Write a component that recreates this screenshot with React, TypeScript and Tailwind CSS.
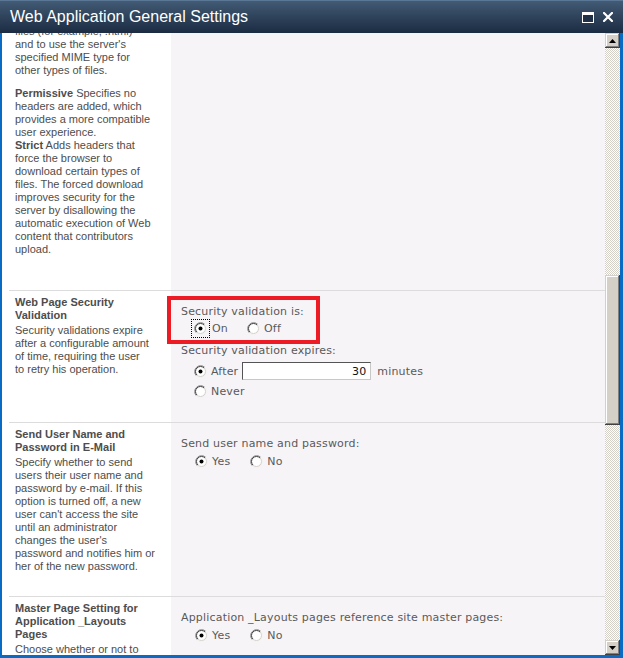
import React from "react";

const Radio = ({ checked }: { checked?: boolean }) => (
  <svg width="13" height="13" viewBox="0 0 13 13" className="block shrink-0">
    <circle cx="6.5" cy="6.5" r="6" fill="#ffffff" />
    <path d="M2.26 10.74 A6 6 0 0 1 10.74 2.26" stroke="#8a8a8a" strokeWidth="1" fill="none" />
    <path d="M10.74 2.26 A6 6 0 0 1 2.26 10.74" stroke="#f0f0f0" strokeWidth="1" fill="none" />
    <path d="M2.96 10.04 A5 5 0 0 1 10.04 2.96" stroke="#404040" strokeWidth="1" fill="none" />
    <path d="M10.04 2.96 A5 5 0 0 1 2.96 10.04" stroke="#d4d0c8" strokeWidth="1" fill="none" />
    {checked && <circle cx="6.5" cy="6.5" r="2" fill="#000000" />}
  </svg>
);

const Arrow = ({ up }: { up?: boolean }) => (
  <svg width="7" height="4" viewBox="0 0 7 4" className="block">
    {up ? <path d="M3.5 0 L7 4 L0 4 Z" fill="#000" /> : <path d="M0 0 L7 0 L3.5 4 Z" fill="#000" />}
  </svg>
);

const bevel =
  "bg-[#d4d0c8] shadow-[inset_-1px_-1px_0_#404040,inset_1px_1px_0_#d4d0c8,inset_-2px_-2px_0_#808080,inset_2px_2px_0_#ffffff]";

const leftText = "font-['Liberation_Sans',Arial,sans-serif] text-[11px] leading-[13px] text-[#4d4d4d]";
const rightText = "font-['DejaVu_Sans',Verdana,sans-serif] text-[11px] leading-[13px] tracking-[0.18px] text-[#5a5a5a]";

export default function App() {
  return (
    <div className="w-[623px] h-[658px] flex flex-col bg-white overflow-hidden">
      {/* Title bar */}
      <div className="h-[33px] shrink-0 flex items-center bg-gradient-to-b from-[#435b75] to-[#1b2c42] border-t border-[#5a7796] pl-[10px] pr-[10px]">
        <span className="font-['Liberation_Sans',Arial,sans-serif] text-[16px] text-white leading-none">
          Web Application General Settings
        </span>
        <div className="ml-auto flex items-center gap-[9px]">
          <svg width="12" height="11" viewBox="0 0 12 11" className="block">
            <rect x="0" y="0" width="12" height="11" fill="#ffffff" />
            <rect x="1" y="3" width="10" height="7" fill="#1f3047" />
          </svg>
          <svg width="10" height="10" viewBox="0 0 10 10" className="block">
            <path d="M1 1 L9 9 M9 1 L1 9" stroke="#ffffff" strokeWidth="2.2" strokeLinecap="square" />
          </svg>
        </div>
      </div>

      {/* Body */}
      <div className="flex flex-1 min-h-0 border-l-2 border-r-[3px] border-b-[3px] border-[#0a6bc4]">
        <div className="flex-1 min-w-0 overflow-hidden bg-white flex flex-col">
          {/* Row 1 */}
          <div className="flex ml-[7px] h-[257px] shrink-0">
            <div className={`w-[162px] shrink-0 bg-white pl-[6px] overflow-hidden ${leftText}`}>
              <p className="-mt-[8px]">
                files (for example, .html)
                <br />
                and to use the server's
                <br />
                specified MIME type for
                <br />
                other types of files.
              </p>
              <p className="mt-[10px]">
                <b>Permissive</b> Specifies no
                <br />
                headers are added, which
                <br />
                provides a more compatible
                <br />
                user experience.
                <br />
                <b>Strict</b> Adds headers that
                <br />
                force the browser to
                <br />
                download certain types of
                <br />
                files. The forced download
                <br />
                improves security for the
                <br />
                server by disallowing the
                <br />
                automatic execution of Web
                <br />
                content that contributors
                <br />
                upload.
              </p>
            </div>
            <div className="flex-1 bg-[#f7f4f8]" />
          </div>

          {/* Row 2 */}
          <div className="flex ml-[7px] h-[132px] shrink-0 border-t border-[#dcdcdc]">
            <div className={`w-[162px] shrink-0 bg-white pl-[6px] pt-[5px] ${leftText}`}>
              <div className="font-bold">
                Web Page Security
                <br />
                Validation
              </div>
              <div className="mt-[2px]">
                Security validations expire
                <br />
                after a configurable amount
                <br />
                of time, requiring the user
                <br />
                to retry his operation.
              </div>
            </div>
            <div className={`flex-1 bg-[#f7f4f8] pt-[5px] ${rightText}`}>
              <div className="-ml-[4px] w-[153px] border-4 border-[#ed1c24] pt-[5px] pb-[3px]">
                <div className="pl-[10px]">Security validation is:</div>
                <div className="mt-[2px] h-[17px] flex items-center pl-[20px]">
                  <span className="border border-dotted border-black p-[2px]">
                    <Radio checked />
                  </span>
                  <span className="ml-[2px]">On</span>
                  <span className="ml-[19px]">
                    <Radio />
                  </span>
                  <span className="ml-[4px]">Off</span>
                </div>
              </div>
              <div className="pl-[10px]">Security validation expires:</div>
              <div className="mt-[5px] h-[18px] flex items-center pl-[23px]">
                <Radio checked />
                <span className="ml-[4px]">After</span>
                <div className="ml-[4px] w-[129px] h-[18px] bg-white border border-t-[#555555] border-l-[#555555] border-r-[#c8c8c8] border-b-[#c8c8c8] flex items-center justify-end pr-[4px] text-[#111111]">
                  30
                </div>
                <span className="ml-[6px]">minutes</span>
              </div>
              <div className="mt-[3px] h-[17px] flex items-center pl-[23px]">
                <Radio />
                <span className="ml-[4px]">Never</span>
              </div>
            </div>
          </div>

          {/* Row 3 */}
          <div className="flex ml-[7px] h-[174px] shrink-0 border-t border-[#dcdcdc]">
            <div className={`w-[162px] shrink-0 bg-white pl-[6px] pt-[5px] ${leftText}`}>
              <div className="font-bold">
                Send User Name and
                <br />
                Password in E-Mail
              </div>
              <div className="mt-[2px]">
                Specify whether to send
                <br />
                users their user name and
                <br />
                password by e-mail. If this
                <br />
                option is turned off, a new
                <br />
                user can't access the site
                <br />
                until an administrator
                <br />
                changes the user's
                <br />
                password and notifies him or
                <br />
                her of the new password.
              </div>
            </div>
            <div className={`flex-1 bg-[#f7f4f8] pt-[14px] ${rightText}`}>
              <div className="pl-[10px]">Send user name and password:</div>
              <div className="mt-[3px] h-[17px] flex items-center pl-[24px]">
                <Radio checked />
                <span className="ml-[4px]">Yes</span>
                <span className="ml-[20px]">
                  <Radio />
                </span>
                <span className="ml-[4px]">No</span>
              </div>
            </div>
          </div>

          {/* Row 4 */}
          <div className="flex ml-[7px] flex-1 border-t border-[#dcdcdc]">
            <div className={`w-[162px] shrink-0 bg-white pl-[6px] pt-[5px] ${leftText}`}>
              <div className="font-bold">
                Master Page Setting for
                <br />
                Application _Layouts
                <br />
                Pages
              </div>
              <div className="mt-[2px]">Choose whether or not to</div>
            </div>
            <div className={`flex-1 bg-[#f7f4f8] pt-[14px] ${rightText}`}>
              <div className="pl-[10px] whitespace-nowrap">
                Application _Layouts pages reference site master pages:
              </div>
              <div className="mt-[3px] h-[17px] flex items-center pl-[24px]">
                <Radio checked />
                <span className="ml-[4px]">Yes</span>
                <span className="ml-[20px]">
                  <Radio />
                </span>
                <span className="ml-[4px]">No</span>
              </div>
            </div>
          </div>
        </div>

        {/* Scrollbar */}
        <div className="w-[15px] shrink-0 flex flex-col">
          <div className={`h-[15px] shrink-0 flex items-center justify-center ${bevel}`}>
            <Arrow up />
          </div>
          <div className="flex-1 flex flex-col bg-[repeating-conic-gradient(#d4d0c8_0_25%,#ffffff_0_50%)] bg-[length:2px_2px]">
            <div className={`mt-[227px] h-[150px] ${bevel}`} />
          </div>
          <div className={`h-[15px] shrink-0 flex items-center justify-center ${bevel}`}>
            <Arrow />
          </div>
        </div>
      </div>
    </div>
  );
}
